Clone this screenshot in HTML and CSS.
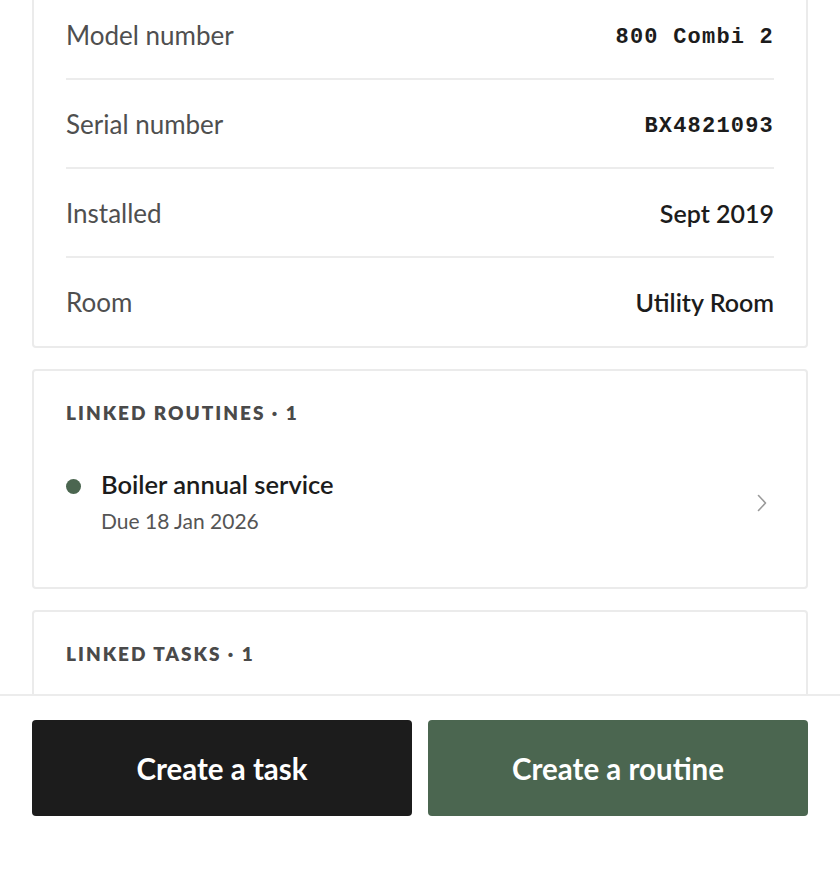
FILE: index.html
```html
<!DOCTYPE html>
<html lang="en">
<head>
<meta charset="utf-8">
<title>Boiler</title>
<link rel="stylesheet" href="styles.css">
</head>
<body>
<div class="page">
  <div class="scroll" id="scroll">
    <div class="stack">
      <section class="card details">
        <div class="row">
          <span class="label">Model number</span>
          <span class="value mono">800 Combi 2</span>
        </div>
        <div class="row">
          <span class="label">Serial number</span>
          <span class="value mono">BX4821093</span>
        </div>
        <div class="row">
          <span class="label">Installed</span>
          <span class="value">Sept 2019</span>
        </div>
        <div class="row">
          <span class="label">Room</span>
          <span class="value">Utility Room</span>
        </div>
      </section>

      <section class="card linked">
        <h2 class="section-title">Linked routines · 1</h2>
        <div class="item">
          <span class="dot"></span>
          <div class="item-text">
            <div class="item-title">Boiler annual service</div>
            <div class="item-sub">Due 18 Jan 2026</div>
          </div>
          <svg class="chev" width="12" height="20" viewBox="0 0 12 20" aria-hidden="true"><path d="M2.5 2.5 L9.5 10 L2.5 17.5" fill="none" stroke="#9a9a9a" stroke-width="1.6" stroke-linecap="round" stroke-linejoin="round"/></svg>
        </div>
      </section>

      <section class="card linked tasks">
        <h2 class="section-title">Linked tasks · 1</h2>
      </section>
    </div>
  </div>
  <footer class="footer">
    <button class="btn btn-dark">Create a task</button>
    <button class="btn btn-green">Create a routine</button>
  </footer>
</div>
<script src="script.js"></script>
</body>
</html>
```

FILE: styles.css
```css
* { box-sizing: border-box; }
html, body { margin: 0; padding: 0; background: #ffffff; }
body {
  font-family: "Lato", "Open Sans", sans-serif;
  color: #1c1c1c;
}
.page {
  height: 880px;
  display: flex;
  flex-direction: column;
}
.scroll {
  height: 694px;
  overflow: hidden;
  flex: none;
}
.stack {
  padding: 24px 32px 40px;
  display: flex;
  flex-direction: column;
  gap: 21px;
}
.card {
  border: 2px solid #ebebeb;
  border-radius: 4px;
  background: #fff;
}
.details { padding: 0 32px; }
.row {
  height: 89px;
  display: flex;
  align-items: center;
  justify-content: space-between;
  border-bottom: 2px solid #ececec;
}
.row:last-child { border-bottom: none; height: 88px; }
.label {
  font-size: 26px;
  color: #4f4f4f;
  font-weight: 400;
}
.value {
  font-size: 25px;
  font-weight: 600;
  color: #1c1c1c;
}
.mono {
  font-family: "Liberation Mono", "Courier New", monospace;
  font-weight: 700;
  font-size: 22px;
  letter-spacing: 1.2px;
  padding-top: 5px;
}
.linked { padding: 30px 32px 0; }
.section-title {
  margin: 0;
  font-size: 19px;
  line-height: 24px;
  font-weight: 800;
  letter-spacing: 2px;
  text-transform: uppercase;
  color: #4a4a4a;
}
.item {
  display: flex;
  align-items: center;
  gap: 20px;
  padding: 43px 0 52px;
}
.dot {
  width: 15px;
  height: 15px;
  border-radius: 50%;
  background: #4b6650;
  flex: none;
  align-self: flex-start;
  margin-top: 11px;
}
.item-text { flex: 1; }
.item-title {
  font-size: 25.5px;
  line-height: 32px;
  font-weight: 600;
  color: #1c1c1c;
}
.item-sub {
  margin-top: 7px;
  font-size: 21px;
  line-height: 28px;
  color: #555;
}
.chev { flex: none; margin-right: 6px; margin-top: 3px; }
.tasks { min-height: 200px; }
.footer {
  flex: 1;
  border-top: 2px solid #ececec;
  padding: 24px 32px 0;
  display: flex;
  gap: 16px;
  align-items: flex-start;
}
.btn {
  flex: 1;
  height: 96px;
  border: none;
  border-radius: 4px;
  font-family: "Lato", sans-serif;
  font-size: 29.5px;
  font-weight: 700;
  color: #fff;
  cursor: pointer;
}
.btn-dark { background: #1c1c1c; }
.btn-green { background: #4b6650; }
```

FILE: script.js
```js
document.getElementById('scroll').scrollTop = 35;
```
